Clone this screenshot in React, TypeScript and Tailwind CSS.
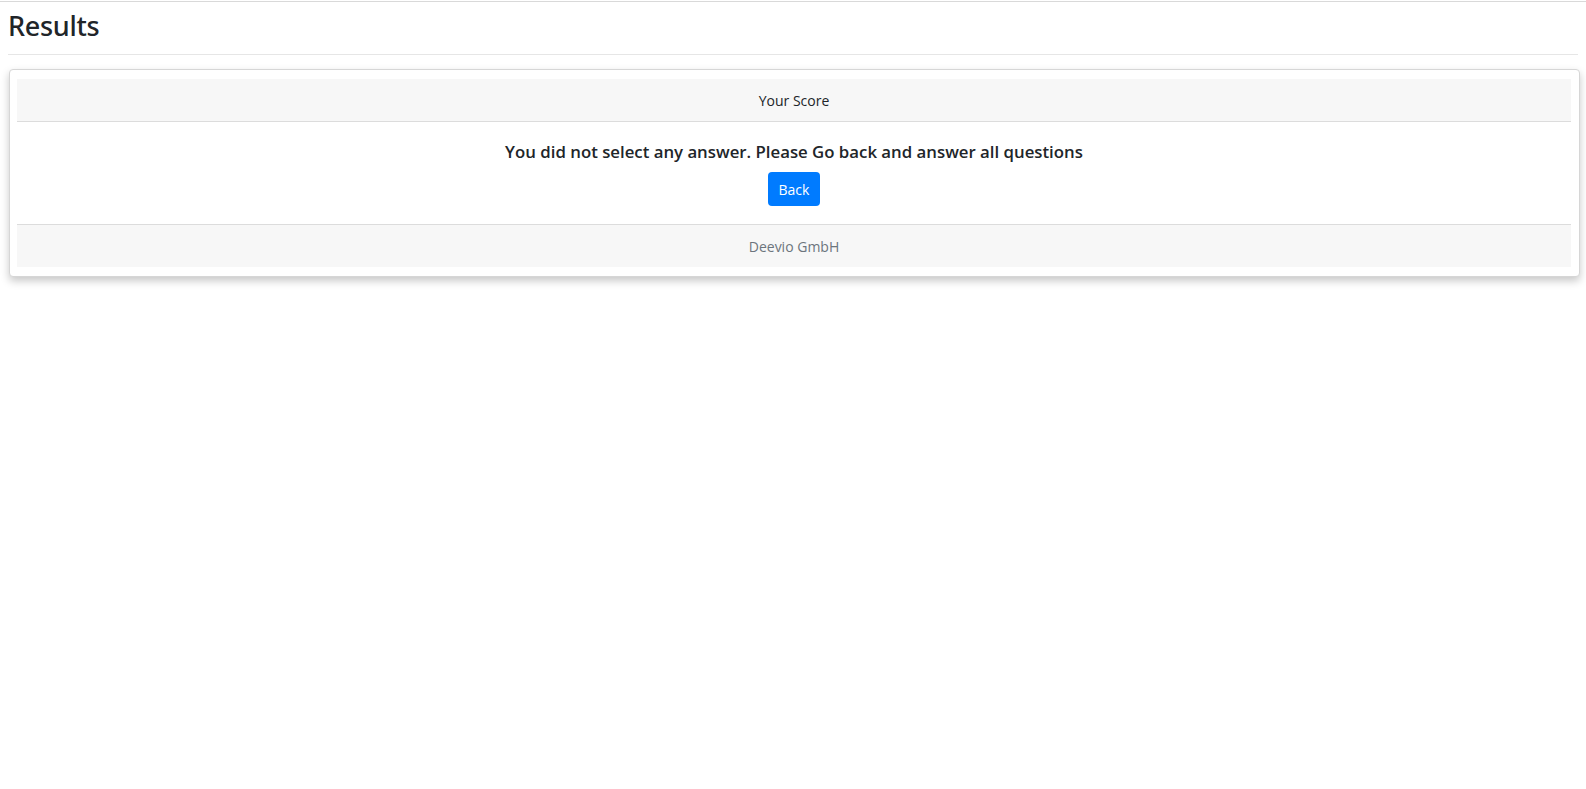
export default function App() {
  const font = { fontFamily: '"Open Sans", "Noto Sans", sans-serif' };
  return (
    <div className="min-h-[789px] bg-white text-[#212529]" style={font}>
      <div className="h-px bg-white" />
      <div className="h-px bg-[#d9d9d9]" />
      <div className="px-[8px]">
        <h2
          className="pt-[7px] text-[27px] leading-[34px] font-medium tracking-[-0.3px]"
          style={{ fontFamily: '"Noto Sans", "Open Sans", sans-serif' }}
        >
          Results
        </h2>
        <div className="mt-[11px] h-px bg-[#e6e6e6]" />
        <div className="mt-[14px] ml-[1px] mr-[-2px] rounded-[4px] border border-[#d6d6d6] bg-white pt-[9px] pb-[9px] pl-[7px] pr-[8px] shadow-[0_4px_8px_rgba(0,0,0,0.22)]">
          <div className="flex h-[43px] items-center justify-center border-b border-[#dcdcdc] bg-[#f7f7f7] text-[14px]">
            Your Score
          </div>
          <div className="flex h-[102px] flex-col items-center pt-[18px]">
            <h5 className="text-[16.8px] leading-[24px] font-semibold">
              You did not select any answer. Please Go back and answer all questions
            </h5>
            <button className="mt-[8px] flex h-[34px] items-center rounded-[4px] bg-[#007bff] px-[11px] text-[14px] text-white">
              Back
            </button>
          </div>
          <div className="flex h-[43px] items-center justify-center border-t border-[#dcdcdc] bg-[#f7f7f7] text-[14px] text-[#6c757d]">
            Deevio GmbH
          </div>
        </div>
      </div>
    </div>
  );
}
